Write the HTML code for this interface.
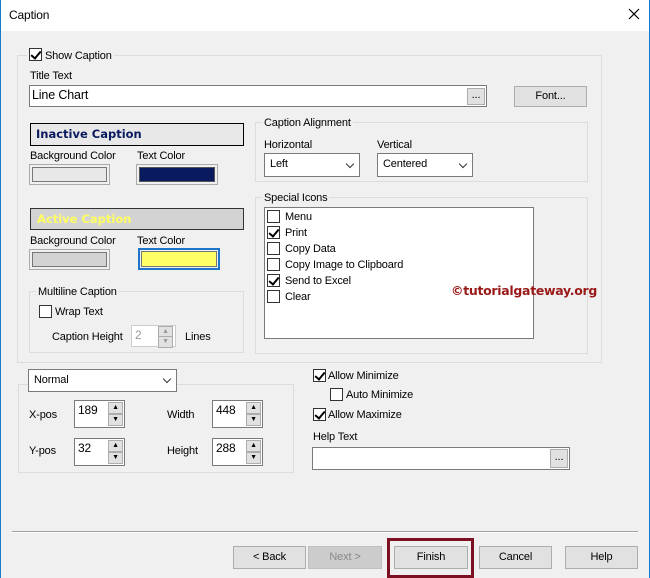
<!DOCTYPE html>
<html><head><style>
*{box-sizing:border-box;margin:0;padding:0}
body{width:650px;height:578px;overflow:hidden;background:#f0f0f0;font-family:"Liberation Sans",sans-serif;font-size:11px;letter-spacing:-0.15px;color:#000;position:relative}
.a{position:absolute}
.t{position:absolute;white-space:nowrap;line-height:14px}
.grp{position:absolute;border:1px solid #dcdcdc}
.lbl{position:absolute;background:#f0f0f0;padding:0 2px;white-space:nowrap;line-height:14px}
.box{position:absolute;background:#fff;border:1px solid #7a7a7a}
.cb{position:absolute;width:13px;height:13px;border:1px solid #333;background:#fff}
.btn{position:absolute;background:#e1e1e1;border:1px solid #adadad;text-align:center;line-height:21px}
.combo{position:absolute;background:#fff;border:1px solid #7a7a7a;padding-left:5px;line-height:21px}
.chev{position:absolute;right:6px;top:7px;width:6px;height:6px;border-right:1px solid #333;border-bottom:1px solid #333;transform:rotate(45deg)}
.spin{position:absolute;background:#fff;border:1px solid #7a7a7a;padding-left:3px;line-height:18px;font-size:12px}
.sb{position:absolute;right:1px;width:15px;height:12px;background:#e1e1e1;border:1px solid #adadad;font-size:7px;text-align:center;line-height:10px}
.ck::after{content:"";position:absolute;left:3px;top:0px;width:4px;height:8px;border-right:2px solid #000;border-bottom:2px solid #000;transform:rotate(40deg)}
</style></head><body>
<div class="a" style="left:0;top:0;width:650px;height:31px;background:#fff"></div>
<div class="a" style="left:0;top:0;width:1px;height:578px;background:#1979ca"></div>
<div class="a" style="left:649px;top:0;width:1px;height:578px;background:#1979ca"></div>
<div class="t" style="left:9px;top:8px;font-size:12px">Caption</div>
<svg class="a" style="left:628px;top:8px" width="12" height="12"><path d="M1 1L11 11M11 1L1 11" stroke="#000" stroke-width="1.2"/></svg>

<div class="grp" style="left:17px;top:55px;width:585px;height:308px"></div>
<div class="lbl" style="left:27px;top:48px;padding-left:2px"><span class="cb ck" style="position:relative;display:inline-block;vertical-align:-2px;margin-right:3px"></span>Show Caption</div>
<div class="t" style="left:30px;top:69px">Title Text</div>
<div class="box" style="left:29px;top:85px;width:458px;height:22px"></div>
<div class="t" style="left:32px;top:88px;font-size:12.5px">Line Chart</div>
<div class="btn" style="left:467px;top:88px;width:18px;height:17px;line-height:12px">...</div>
<div class="btn" style="left:514px;top:86px;width:73px;height:21px;line-height:19px">Font...</div>

<div class="a" style="left:30px;top:123px;width:214px;height:23px;background:#e8e8e8;border:1px solid #000"></div>
<div class="t" style="left:36px;top:127px;font-family:'DejaVu Sans',sans-serif;font-weight:bold;font-size:11.5px;letter-spacing:0;color:#0a1a5e">Inactive Caption</div>
<div class="t" style="left:30px;top:149px">Background Color</div>
<div class="t" style="left:137px;top:149px">Text Color</div>
<div class="a" style="left:29px;top:164px;width:81px;height:21px;border:1px solid #aaa;padding:2px"><div style="width:100%;height:100%;background:#e8e8e8;border:1px solid #777"></div></div>
<div class="a" style="left:136px;top:164px;width:82px;height:21px;border:1px solid #aaa;padding:2px"><div style="width:100%;height:100%;background:#0a1a5e;border:1px solid #555"></div></div>

<div class="a" style="left:30px;top:208px;width:214px;height:22px;background:#d3d3d3;border:1px solid #333"></div>
<div class="t" style="left:37px;top:212px;font-family:'DejaVu Sans',sans-serif;font-weight:bold;font-size:11.5px;letter-spacing:0;color:#ffff60">Active Caption</div>
<div class="t" style="left:30px;top:234px">Background Color</div>
<div class="t" style="left:137px;top:234px">Text Color</div>
<div class="a" style="left:29px;top:249px;width:81px;height:21px;border:1px solid #aaa;padding:2px"><div style="width:100%;height:100%;background:#d3d3d3;border:1px solid #777"></div></div>
<div class="a" style="left:138px;top:248px;width:82px;height:22px;border:2px solid #1e74c8;padding:1px"><div style="width:100%;height:100%;background:#ffff66;border:1px solid #777"></div></div>

<div class="grp" style="left:29px;top:291px;width:215px;height:62px"></div>
<div class="lbl" style="left:36px;top:285px">Multiline Caption</div>
<div class="cb" style="left:39px;top:305px"></div>
<div class="t" style="left:55px;top:305px">Wrap Text</div>
<div class="t" style="left:52px;top:330px">Caption Height</div>
<div class="spin" style="left:131px;top:325px;width:45px;height:22px;border-color:#ccc;color:#999">2</div>
<div class="sb" style="left:158px;top:326px;color:#999">▲</div><div class="sb" style="left:158px;top:336px;color:#999">▼</div>
<div class="t" style="left:185px;top:330px">Lines</div>

<div class="grp" style="left:255px;top:122px;width:333px;height:60px"></div>
<div class="lbl" style="left:262px;top:116px">Caption Alignment</div>
<div class="t" style="left:264px;top:138px">Horizontal</div>
<div class="combo" style="left:264px;top:153px;width:96px;height:24px">Left<div class="chev"></div></div>
<div class="t" style="left:377px;top:138px">Vertical</div>
<div class="combo" style="left:377px;top:153px;width:96px;height:24px">Centered<div class="chev"></div></div>

<div class="grp" style="left:255px;top:197px;width:333px;height:157px"></div>
<div class="lbl" style="left:262px;top:191px">Special Icons</div>
<div class="box" style="left:264px;top:207px;width:270px;height:132px"></div>
<div class="cb" style="left:267px;top:210px"></div><div class="t" style="left:285px;top:210px">Menu</div>
<div class="cb ck" style="left:267px;top:226px"></div><div class="t" style="left:285px;top:226px">Print</div>
<div class="cb" style="left:267px;top:242px"></div><div class="t" style="left:285px;top:242px">Copy Data</div>
<div class="cb" style="left:267px;top:258px"></div><div class="t" style="left:285px;top:258px">Copy Image to Clipboard</div>
<div class="cb ck" style="left:267px;top:274px"></div><div class="t" style="left:285px;top:274px">Send to Excel</div>
<div class="cb" style="left:267px;top:290px"></div><div class="t" style="left:285px;top:290px">Clear</div>
<div class="t" style="left:451px;top:284px;font-family:'DejaVu Sans',sans-serif;font-weight:bold;font-size:12.5px;letter-spacing:-0.3px;color:#9a1a1a">©tutorialgateway.org</div>

<div class="grp" style="left:18px;top:384px;width:276px;height:89px"></div>
<div class="combo" style="left:28px;top:369px;width:149px;height:23px;line-height:20px">Normal<div class="chev" style="top:6px"></div></div>
<div class="t" style="left:29px;top:408px">X-pos</div>
<div class="spin" style="left:74px;top:400px;width:51px;height:28px">189</div>
<div class="sb" style="left:108px;top:402px">▲</div><div class="sb" style="left:108px;top:414px">▼</div>
<div class="t" style="left:167px;top:408px">Width</div>
<div class="spin" style="left:212px;top:400px;width:51px;height:28px">448</div>
<div class="sb" style="left:246px;top:402px">▲</div><div class="sb" style="left:246px;top:414px">▼</div>
<div class="t" style="left:29px;top:444px">Y-pos</div>
<div class="spin" style="left:74px;top:438px;width:51px;height:28px">32</div>
<div class="sb" style="left:108px;top:440px">▲</div><div class="sb" style="left:108px;top:452px">▼</div>
<div class="t" style="left:167px;top:444px">Height</div>
<div class="spin" style="left:212px;top:438px;width:51px;height:28px">288</div>
<div class="sb" style="left:246px;top:440px">▲</div><div class="sb" style="left:246px;top:452px">▼</div>

<div class="cb ck" style="left:313px;top:369px"></div><div class="t" style="left:328px;top:369px">Allow Minimize</div>
<div class="cb" style="left:330px;top:388px"></div><div class="t" style="left:346px;top:388px">Auto Minimize</div>
<div class="cb ck" style="left:313px;top:408px"></div><div class="t" style="left:328px;top:408px">Allow Maximize</div>
<div class="t" style="left:313px;top:430px">Help Text</div>
<div class="box" style="left:312px;top:447px;width:258px;height:23px"></div>
<div class="btn" style="left:550px;top:449px;width:18px;height:19px;line-height:14px">...</div>

<div class="a" style="left:12px;top:531px;width:626px;height:1px;background:#a0a0a0"></div>
<div class="a" style="left:12px;top:532px;width:626px;height:1px;background:#fff"></div>
<div class="btn" style="left:233px;top:546px;width:73px;height:23px">&lt; Back</div>
<div class="btn" style="left:308px;top:546px;width:74px;height:23px;background:#ccc;border-color:#bfbfbf;color:#888">Next &gt;</div>
<div class="a" style="left:387px;top:538px;width:87px;height:40px;border:3px solid #7a1020"></div>
<div class="btn" style="left:394px;top:546px;width:74px;height:23px">Finish</div>
<div class="btn" style="left:479px;top:546px;width:73px;height:23px">Cancel</div>
<div class="btn" style="left:565px;top:546px;width:73px;height:23px">Help</div>
</body></html>
